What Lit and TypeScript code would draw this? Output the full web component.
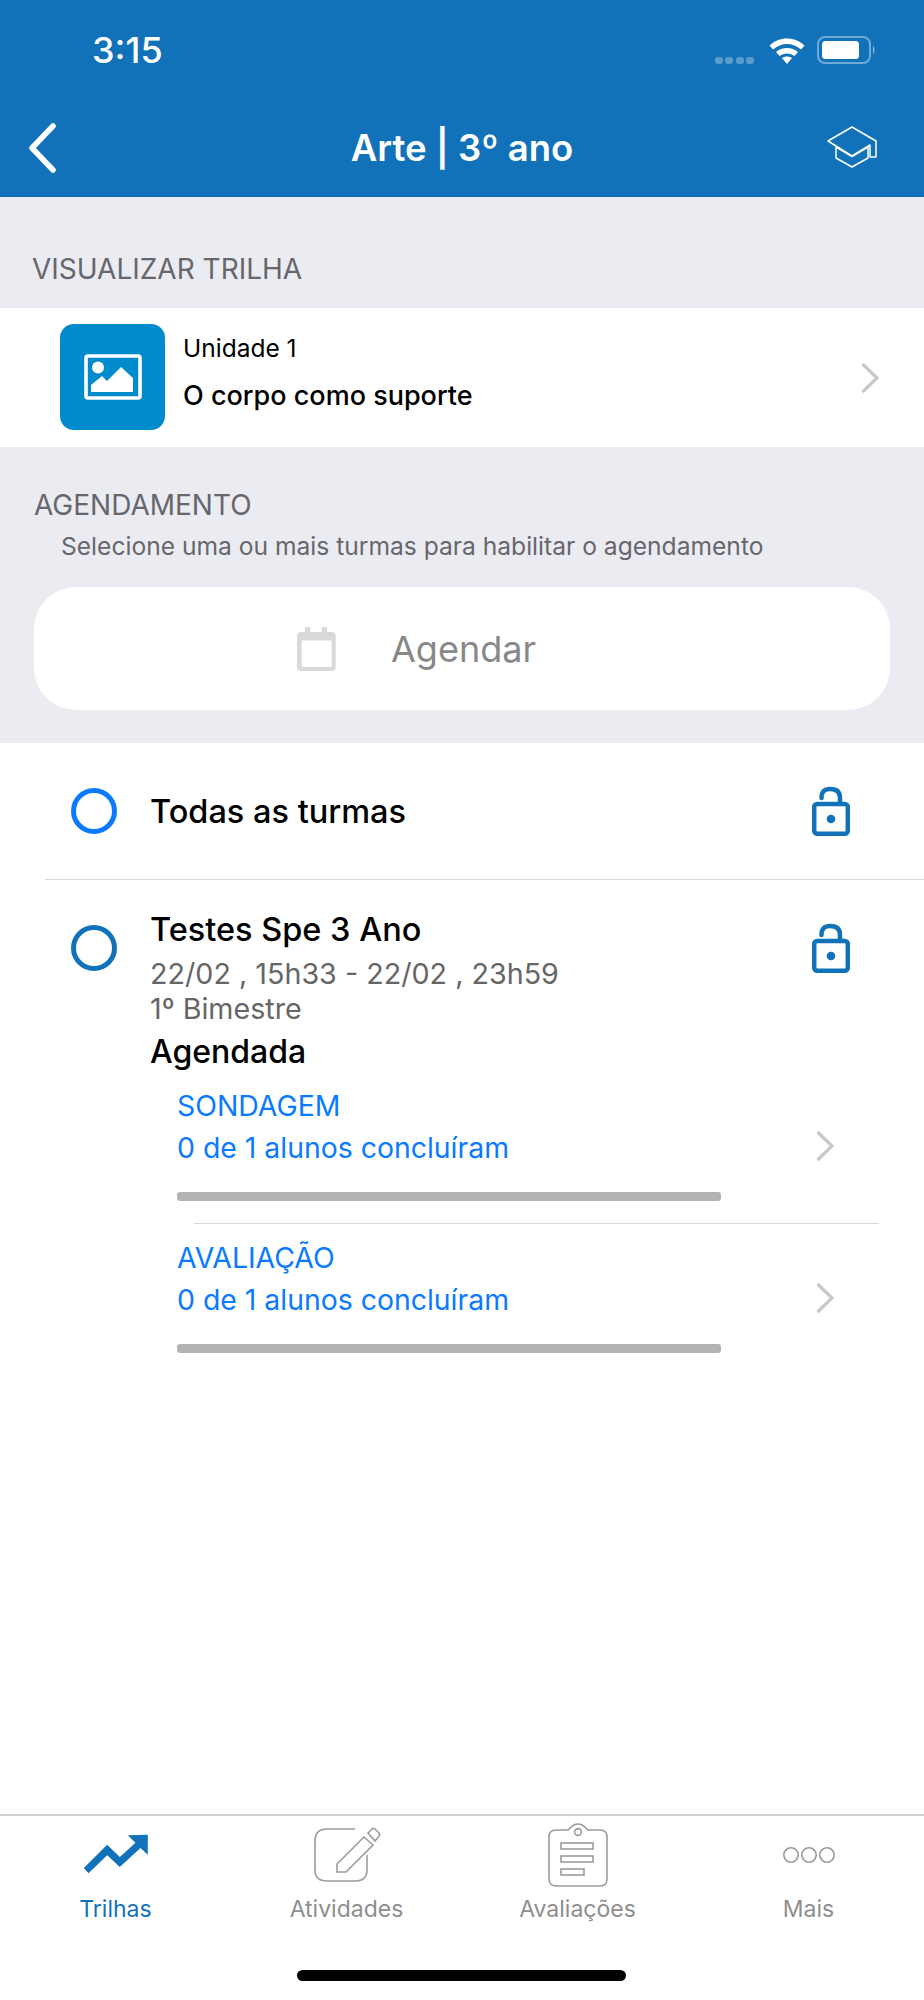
import { LitElement, html, css, svg } from "lit";
import { customElement } from "lit/decorators.js";

const chevron = (cls: string) => html`<svg class=${cls} width="20" height="32" viewBox="0 0 20 32">
  <path d="M2.5 2 L17 16 L2.5 30" fill="none" stroke="#c7c7cc" stroke-width="3.2" />
</svg>`;

const lock = html`<svg class="lock" width="38" height="50" viewBox="0 0 38 50">
  <path d="M9.5 12 C9.5 5 13 3 18.5 3 C24.5 3 28 5.5 28 12 V18" fill="none" stroke="#1172b9" stroke-width="4.5" stroke-linecap="round" />
  <rect x="2.2" y="18" width="33.6" height="29.8" rx="3" fill="none" stroke="#1172b9" stroke-width="4.5" />
  <circle cx="19" cy="33" r="4.3" fill="#1172b9" />
</svg>`;

const tabIcons = {
  trilhas: svg`<svg class="tab-icon" width="66" height="42" viewBox="0 0 66 42">
    <path d="M0.8 34 L24.2 10.7 L36.8 23 L52.5 8.7 L44.8 1.3 L64.8 0.7 L64.8 20.7 L57.5 14 L36.8 33 L24.2 21.3 L5.5 39.3 Z" fill="#1172b9" />
  </svg>`,
  atividades: svg`<svg class="tab-icon" width="68" height="56" viewBox="0 0 68 56" fill="none" stroke="#9b9b9b" stroke-width="1.6">
    <path d="M42 2 H14 C6 2 2 6 2 14 V43 C2 50 6 54 14 54 H42 C50 54 54 50 54 43 V28" />
    <path d="M51 10 L24 37 L24 45 L33 45 L60 18 Z" />
    <path d="M55 6 L59 2 C60 1 61 1 62 2 L66 6 C67 7 67 8 66 9 L62 14 Z" />
  </svg>`,
  avaliacoes: svg`<svg class="tab-icon" width="60" height="64" viewBox="0 0 60 64" fill="none" stroke="#9b9b9b" stroke-width="1.6">
    <path d="M20 7 C23 5 24 1 30 1 C36 1 37 5 40 7 H52 C56 7 59 9 59 14 V56 C59 61 56 63 52 63 H8 C4 63 1 61 1 56 V14 C1 9 4 7 8 7 Z" />
    <circle cx="30" cy="9" r="3.4" />
    <rect x="13" y="20" width="32" height="6" />
    <rect x="13" y="33" width="32" height="6" />
    <rect x="13" y="46" width="23" height="6" />
  </svg>`,
  mais: svg`<svg class="tab-icon" width="56" height="18" viewBox="0 0 56 18" fill="none" stroke="#9b9b9b" stroke-width="1.6">
    <circle cx="10" cy="9" r="7.2" /><circle cx="28" cy="9" r="7.2" /><circle cx="46" cy="9" r="7.2" />
  </svg>`,
};

@customElement("app-root")
export class AppRoot extends LitElement {
  static styles = css`
    :host {
      display: flex;
      flex-direction: column;
      height: 2000px;
      width: 924px;
      background: #fff;
      font-family: Inter, "Liberation Sans", sans-serif;
      color: #000;
    }
    .header {
      height: 197px;
      box-sizing: border-box;
      background: #1172b9;
      border-bottom: 1px solid #0f69ab;
      color: #fff;
    }
    .status {
      display: flex;
      align-items: center;
      height: 100px;
      padding: 0 48px 0 92px;
    }
    .time {
      font-size: 36px;
      font-weight: 500;
      flex: 1;
    }
    .signal {
      display: flex;
      gap: 2.5px;
      margin: 20px 15px 0 0;
    }
    .signal i {
      width: 8px;
      height: 7px;
      border-radius: 3px;
      background: rgba(255, 255, 255, 0.3);
    }
    .battery {
      margin-left: 12px;
    }
    .nav {
      display: flex;
      align-items: center;
      justify-content: space-between;
      height: 96px;
      padding: 0 46px 0 28px;
      position: relative;
    }
    .title {
      position: absolute;
      left: 0;
      right: 0;
      text-align: center;
      font-size: 36.5px;
      font-weight: 600;
    }
    .band {
      background: #ebecf1;
      color: #66666c;
    }
    .band h2 {
      margin: 0;
      font-size: 28px;
      font-weight: 400;
    }
    .trail-head {
      height: 111px;
      padding: 0 32px;
      display: flex;
      align-items: center;
      padding-top: 32px;
      box-sizing: border-box;
    }
    .trail {
      display: flex;
      align-items: center;
      height: 139px;
      padding: 0 44px 0 60px;
    }
    .tile {
      width: 105px;
      height: 106px;
      border-radius: 14px;
      background: #008bcc;
      display: flex;
      align-items: center;
      justify-content: center;
      margin: 0 18px 2px 0;
    }
    .trail-text {
      flex: 1;
      display: flex;
      flex-direction: column;
      gap: 18px;
      padding-bottom: 12px;
    }
    .unit {
      font-size: 24.5px;
      line-height: 30px;
    }
    .unit-name {
      font-size: 27px;
      font-weight: 500;
      line-height: 30px;
    }
    .schedule {
      height: 296px;
      box-sizing: border-box;
      padding: 43px 34px 0;
    }
    .schedule h2 {
      line-height: 30px;
    }
    .hint {
      font-size: 24.6px;
      line-height: 30px;
      margin: 11px 0 26px 27px;
    }
    .btn {
      height: 123px;
      border-radius: 42px;
      background: #fff;
      display: flex;
      align-items: center;
      color: #888;
      font-size: 36px;
      padding-left: 263px;
      gap: 54px;
    }
    .row {
      display: flex;
    }
    .radio {
      width: 46px;
      height: 46px;
      box-sizing: border-box;
      border-radius: 50%;
      border: 5px solid #1172b9;
      margin: 0 33px 0 71px;
      flex: none;
    }
    .radio.on {
      border-color: #0a7aff;
    }
    .all {
      height: 136px;
      align-items: center;
    }
    .all .name {
      padding-top: 2px;
    }
    .name {
      font-size: 32.5px;
      font-weight: 500;
      line-height: 40px;
      flex: 1;
    }
    .lock {
      flex: none;
      margin-right: 74px;
    }
    .rule {
      height: 1px;
      background: #d8d8d8;
      margin-left: 45px;
    }
    .group {
      padding-top: 30px;
    }
    .group .radio {
      margin-top: 15px;
    }
    .group .lock {
      margin-top: 13px;
    }
    .group-body {
      flex: 1;
    }
    .meta {
      font-size: 28.7px;
      line-height: 35px;
      color: #666;
    }
    .name + .meta {
      margin-top: 6px;
    }
    .state {
      font-size: 32px;
      font-weight: 500;
      line-height: 40px;
      margin-top: 6px;
    }
    .items {
      padding-left: 151px;
    }
    .item {
      display: flex;
      color: #0a7aff;
      padding-left: 26px;
    }
    .item-text {
      flex: 1;
      font-size: 28.4px;
      line-height: 36px;
    }
    .item-text div + div {
      margin-top: 6px;
    }
    .item .chev {
      align-self: flex-end;
      margin: 0 89px 4px 0;
    }
    .bar {
      width: 544px;
      height: 9px;
      border-radius: 3px;
      background: #b3b3b3;
      margin: 26px 0 0 26px;
    }
    .subrule {
      height: 1px;
      background: #d8d8d8;
      margin: 22px 45px 16px 43px;
    }
    .first {
      margin-top: 16px;
    }
    .spacer {
      flex: 1;
    }
    .tabs {
      height: 186px;
      box-sizing: border-box;
      border-top: 2px solid #cfcfcf;
      display: grid;
      grid-template-columns: repeat(4, 231px);
      position: relative;
    }
    .tab {
      display: flex;
      flex-direction: column;
      align-items: center;
      color: #8e8e8e;
      font-size: 23px;
      height: 107px;
      justify-content: flex-end;
    }
    .tab.active {
      color: #1172b9;
    }
    .tab-slot {
      height: 72px;
      padding-bottom: 4px;
      display: flex;
      align-items: center;
      justify-content: center;
    }
    .home {
      position: absolute;
      left: 297px;
      top: 154px;
      width: 329px;
      height: 11px;
      border-radius: 6px;
      background: #000;
    }
  `;

  renderItem(label: string, first = false) {
    return html`<div class="item ${first ? "first" : ""}">
        <div class="item-text">
          <div>${label}</div>
          <div>0 de 1 alunos concluíram</div>
        </div>
        ${chevron("chev")}
      </div>
      <div class="bar"></div>`;
  }

  render() {
    return html`
      <div class="header">
        <div class="status">
          <div class="time">3:15</div>
          <div class="signal"><i></i><i></i><i></i><i></i></div>
          <svg width="36" height="28" viewBox="0 0 36 28">
            <path d="M0.5 9.5 C10 0 26 0 35.5 9.5 L32 13.5 C24 6 12 6 4 13.5 Z" fill="#fff" />
            <path d="M7 16 C13 10.5 23 10.5 29 16 L25.5 20 C21 16.5 15 16.5 10.5 20 Z" fill="#fff" />
            <path d="M13 22 C16 20 20 20 23 22 L18 28 Z" fill="#fff" />
          </svg>
          <svg class="battery" width="59" height="28" viewBox="0 0 59 28">
            <rect x="1" y="1" width="52" height="26" rx="7" fill="none" stroke="rgba(255,255,255,.4)" stroke-width="2" />
            <rect x="5" y="5" width="37" height="18" rx="3.5" fill="#fff" />
            <path d="M56 10 C58 11 58 17 56 18 Z" fill="rgba(255,255,255,.5)" />
          </svg>
        </div>
        <div class="nav">
          <svg width="30" height="50" viewBox="0 0 30 50">
            <path d="M25 3 L4 25 L25 47" fill="none" stroke="#fff" stroke-width="5.5" stroke-linecap="round" stroke-linejoin="round" />
          </svg>
          <div class="title">Arte | 3º ano</div>
          <svg width="52" height="44" viewBox="0 0 52 44" fill="none" stroke="#fff" stroke-width="1.5" stroke-linejoin="round">
            <path d="M26 1 L2 15 L26 30 L44 19 V31 H50 V15 Z" />
            <path d="M10 21 V32 L26 41 L42 32 V21 L26 30.5 Z" />
          </svg>
        </div>
      </div>

      <div class="band trail-head"><h2>VISUALIZAR TRILHA</h2></div>
      <div class="trail">
        <div class="tile">
          <svg width="58" height="46" viewBox="0 0 58 46">
            <rect x="2" y="2" width="54" height="42" rx="2" fill="none" stroke="#fff" stroke-width="3.6" />
            <circle cx="14" cy="13.5" r="6" fill="#fff" />
            <path d="M7 38 V31 L18 22 L23 27 L37 13 L49 24 V38 Z" fill="#fff" />
          </svg>
        </div>
        <div class="trail-text">
          <div class="unit">Unidade 1</div>
          <div class="unit-name">O corpo como suporte</div>
        </div>
        ${chevron("chev")}
      </div>

      <div class="band schedule">
        <h2>AGENDAMENTO</h2>
        <div class="hint">Selecione uma ou mais turmas para habilitar o agendamento</div>
        <div class="btn">
          <svg width="40" height="44" viewBox="0 0 40 44">
            <path fill="#d9d9d9" fill-rule="evenodd" d="M8 0 H13.3 V5 H24.7 V0 H30 V5 H35 Q38.7 5 38.7 9 V40 Q38.7 44 35 44 H4 Q0 44 0 40 V9 Q0 5 4 5 H8 Z M4.7 13.4 V40 H34.7 V13.4 Z" />
          </svg>
          <span>Agendar</span>
        </div>
      </div>

      <div class="row all">
        <div class="radio on"></div>
        <div class="name">Todas as turmas</div>
        ${lock}
      </div>
      <div class="rule"></div>

      <div class="row group">
        <div class="radio"></div>
        <div class="group-body">
          <div class="name">Testes Spe 3 Ano</div>
          <div class="meta">22/02 , 15h33 - 22/02 , 23h59</div>
          <div class="meta">1º Bimestre</div>
          <div class="state">Agendada</div>
        </div>
        ${lock}
      </div>
      <div class="items">
        ${this.renderItem("SONDAGEM", true)}
        <div class="subrule"></div>
        ${this.renderItem("AVALIAÇÃO")}
      </div>

      <div class="spacer"></div>

      <div class="tabs">
        <div class="tab active"><div class="tab-slot">${tabIcons.trilhas}</div>Trilhas</div>
        <div class="tab"><div class="tab-slot">${tabIcons.atividades}</div>Atividades</div>
        <div class="tab"><div class="tab-slot">${tabIcons.avaliacoes}</div>Avaliações</div>
        <div class="tab"><div class="tab-slot">${tabIcons.mais}</div>Mais</div>
        <div class="home"></div>
      </div>
    `;
  }
}
